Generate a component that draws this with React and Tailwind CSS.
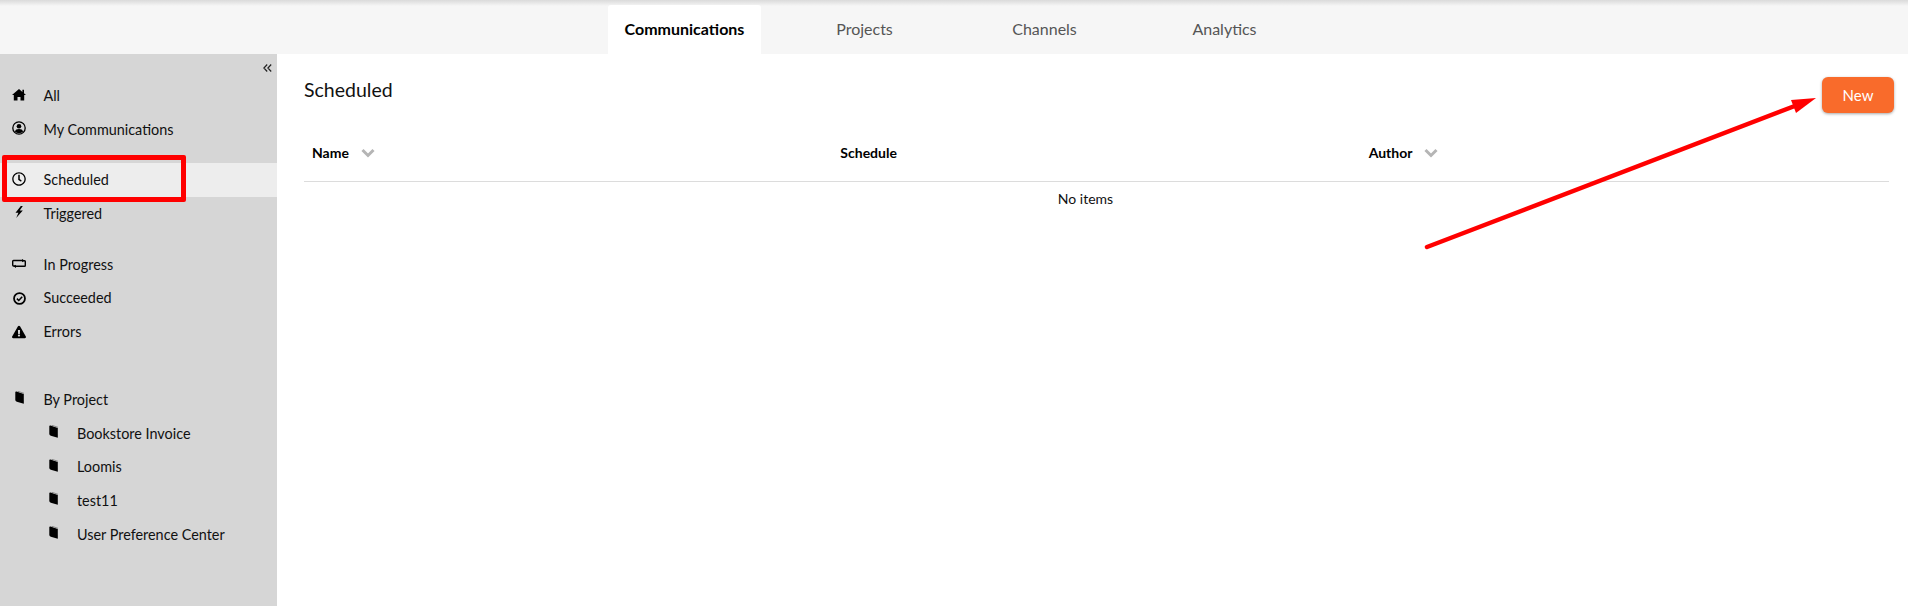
import { FaRegClock, FaExclamationTriangle } from "react-icons/fa";

function HomeIcon({ className }) {
  return (
    <svg viewBox="0 0 14 11.500" className={className} fill="currentColor">
      <path d="M7 0 L10.400 2.900 V0.700 H12 V4.300 L14 6 H12.200 V11.500 H8.500 V8 H5.500 V11.500 H1.800 V6 H0 Z" />
    </svg>
  );
}

function UserRing({ className }) {
  return (
    <svg viewBox="0 0 14 14" className={className} fill="none">
      <circle cx="7" cy="7" r="6.200" stroke="currentColor" strokeWidth="1.300" />
      <circle cx="7" cy="5.200" r="2.300" fill="currentColor" />
      <path d="M2.900 10.600c.5-1.700 1.800-2.500 4.100-2.500s3.600.8 4.100 2.500c-1 1.100-2.500 1.700-4.100 1.700s-3.100-.6-4.100-1.700z" fill="currentColor" />
    </svg>
  );
}

function BoltIcon({ className }) {
  return (
    <svg viewBox="0 0 8 12" className={className} fill="currentColor">
      <path d="M5.800 0 L0.500 6.800 H3.400 L1.200 12 L7.800 4.600 H4.700 L7.800 0 Z" />
    </svg>
  );
}

function LoopIcon({ className }) {
  return (
    <svg viewBox="0 0 14 9" className={className} fill="none" stroke="currentColor">
      <path d="M10.500 1.500 H1.500 Q0.700 1.500 0.700 2.300 V6 Q0.700 7 1.500 7 H3" strokeWidth="1.400" />
      <path d="M3.500 7.300 H12.500 Q13.300 7.300 13.300 6.500 V2.800 Q13.300 1.800 12.500 1.800 H11" strokeWidth="1.400" />
      <path d="M10 0 L12.500 1.600 L10 3.200 Z M4 5.800 L1.500 7.300 L4 9 Z" fill="currentColor" stroke="none" />
    </svg>
  );
}

function CheckRing({ className }) {
  return (
    <svg viewBox="0 0 14 14" className={className} fill="none" stroke="currentColor">
      <circle cx="7" cy="7" r="5.900" strokeWidth="1.900" />
      <path d="M4.200 7.200 L6.200 9.100 L9.900 5.100" strokeWidth="1.700" />
    </svg>
  );
}

function Book({ className }) {
  return (
    <svg viewBox="0 0 9 13" className={className}>
      <path d="M0.300 1.400 Q0.300 0.100 1.500 0.500 L8.800 3 V12.800 L1.800 10.800 Q0.300 10.300 0.300 9 Z" fill="#000" />
      <path d="M2.600 0.200 L9 2.300" stroke="#777" strokeWidth="0.800" />
    </svg>
  );
}

function SortChevron() {
  return (
    <svg viewBox="0 0 14 10" className="ml-[12px] h-[10px] w-[14px]" fill="none">
      <path d="M1.500 2 L7 7.500 L12.500 2" stroke="#b5b5b5" strokeWidth="3" />
    </svg>
  );
}

function NavRow({ icon: Icon, label, active, sub, iconClass = "h-[14px] w-[14px]", lift = "pb-[2px]" }) {
  return (
    <li
      className={`flex h-[33.600px] items-center ${sub ? "pl-[46px]" : "pl-[12px]"} ${active ? "bg-[#ededed]" : ""}`}
    >
      <span className={`flex w-[14px] justify-center text-black ${lift}`}>
        <Icon className={iconClass} />
      </span>
      <span className={`${sub ? "ml-[17px]" : "ml-[17.500px]"} text-[14.400px] text-[#111]`}>{label}</span>
    </li>
  );
}

const bookCls = "h-[13px] w-[9px]";
const bookLift = "pb-[4px]";

export default function App() {
  return (
    <div className="relative h-[606px] w-[1908px] overflow-hidden bg-white font-['Lato','Inter',sans-serif] text-black">
      {/* top tabs */}
      <div className="flex h-[54px] items-end gap-[27px] bg-[linear-gradient(#dadada,#f6f6f6_6px)] pl-[608px]">
        <div className="flex h-[49px] w-[153px] items-center justify-center rounded-t-[3px] bg-white pb-[2px] text-[16px] font-bold">
          Communications
        </div>
        {["Projects", "Channels", "Analytics"].map((t) => (
          <div key={t} className="flex h-[49px] w-[153px] items-center justify-center pb-[2px] text-[16px] text-[#555]">
            {t}
          </div>
        ))}
      </div>

      <div className="flex h-[552px]">
        {/* sidebar */}
        <aside className="w-[277px] shrink-0 bg-[#d6d6d6]">
          <div className="flex h-[25px] items-center justify-end pr-[5px] pt-[2px] text-[#222]">
            <svg viewBox="0 0 9 8" className="h-[8px] w-[9px]" fill="none" stroke="currentColor" strokeWidth="1.200">
              <path d="M4.200 0.500 L0.900 4 L4.200 7.500 M8.200 0.500 L4.900 4 L8.200 7.500" />
            </svg>
          </div>
          <ul>
            <NavRow icon={HomeIcon} label="All" iconClass="h-[11.500px] w-[14px]" />
            <NavRow icon={UserRing} label="My Communications" />
          </ul>
          <ul className="mt-[16.800px]">
            <NavRow icon={FaRegClock} label="Scheduled" active />
            <NavRow icon={BoltIcon} label="Triggered" iconClass="h-[12px] w-[8px]" />
          </ul>
          <ul className="mt-[17.600px]">
            <NavRow icon={LoopIcon} label="In Progress" iconClass="h-[9px] w-[14px]" />
            <NavRow icon={CheckRing} label="Succeeded" iconClass="h-[13px] w-[13px]" lift="" />
            <NavRow icon={FaExclamationTriangle} label="Errors" lift="" />
          </ul>
          <ul className="mt-[34.600px]">
            <NavRow icon={Book} label="By Project" iconClass={bookCls} lift={bookLift} />
            <NavRow icon={Book} label="Bookstore Invoice" iconClass={bookCls} lift={bookLift} sub />
            <NavRow icon={Book} label="Loomis" iconClass={bookCls} lift={bookLift} sub />
            <NavRow icon={Book} label="test11" iconClass={bookCls} lift={bookLift} sub />
            <NavRow icon={Book} label="User Preference Center" iconClass={bookCls} lift={bookLift} sub />
          </ul>
        </aside>

        {/* main */}
        <main className="min-w-0 flex-1 pl-[27px] pr-[19px]">
          <div className="flex items-start justify-between pt-[23px]">
            <h1 className="text-[19.500px] leading-[26px] text-[#111]">Scheduled</h1>
            <button className="mr-[-5px] h-[36px] w-[72px] rounded-[6px] bg-[#f96b2b] text-[15px] text-white shadow-[0_1px_3px_rgba(0,0,0,0.35)]">
              New
            </button>
          </div>
          <div className="mt-[11px] grid h-[58px] grid-cols-3 items-center border-b border-[#dcdcdc] text-[14px] font-bold">
            <div className="flex items-center pl-[8px]">
              Name
              <SortChevron />
            </div>
            <div className="pl-[8px]">Schedule</div>
            <div className="flex items-center pl-[8px]">
              Author
              <SortChevron />
            </div>
          </div>
          <p className="mt-[6px] pr-[22px] text-center text-[14px] text-[#111]">No items</p>
        </main>
      </div>

      {/* annotations drawn over the page */}
      <div className="absolute left-[2px] top-[155px] h-[47px] w-[184px] rounded-[2px] border-[5px] border-[#ff0000]" />
      <svg className="absolute left-0 top-0 h-[606px] w-[1908px]" viewBox="0 0 1908 606" fill="none">
        <path d="M1427 247 L1800 104" stroke="#ff0000" strokeWidth="4.500" strokeLinecap="round" />
        <path d="M1816 98 L1791 100 L1796 113 Z" fill="#ff0000" />
      </svg>
    </div>
  );
}
